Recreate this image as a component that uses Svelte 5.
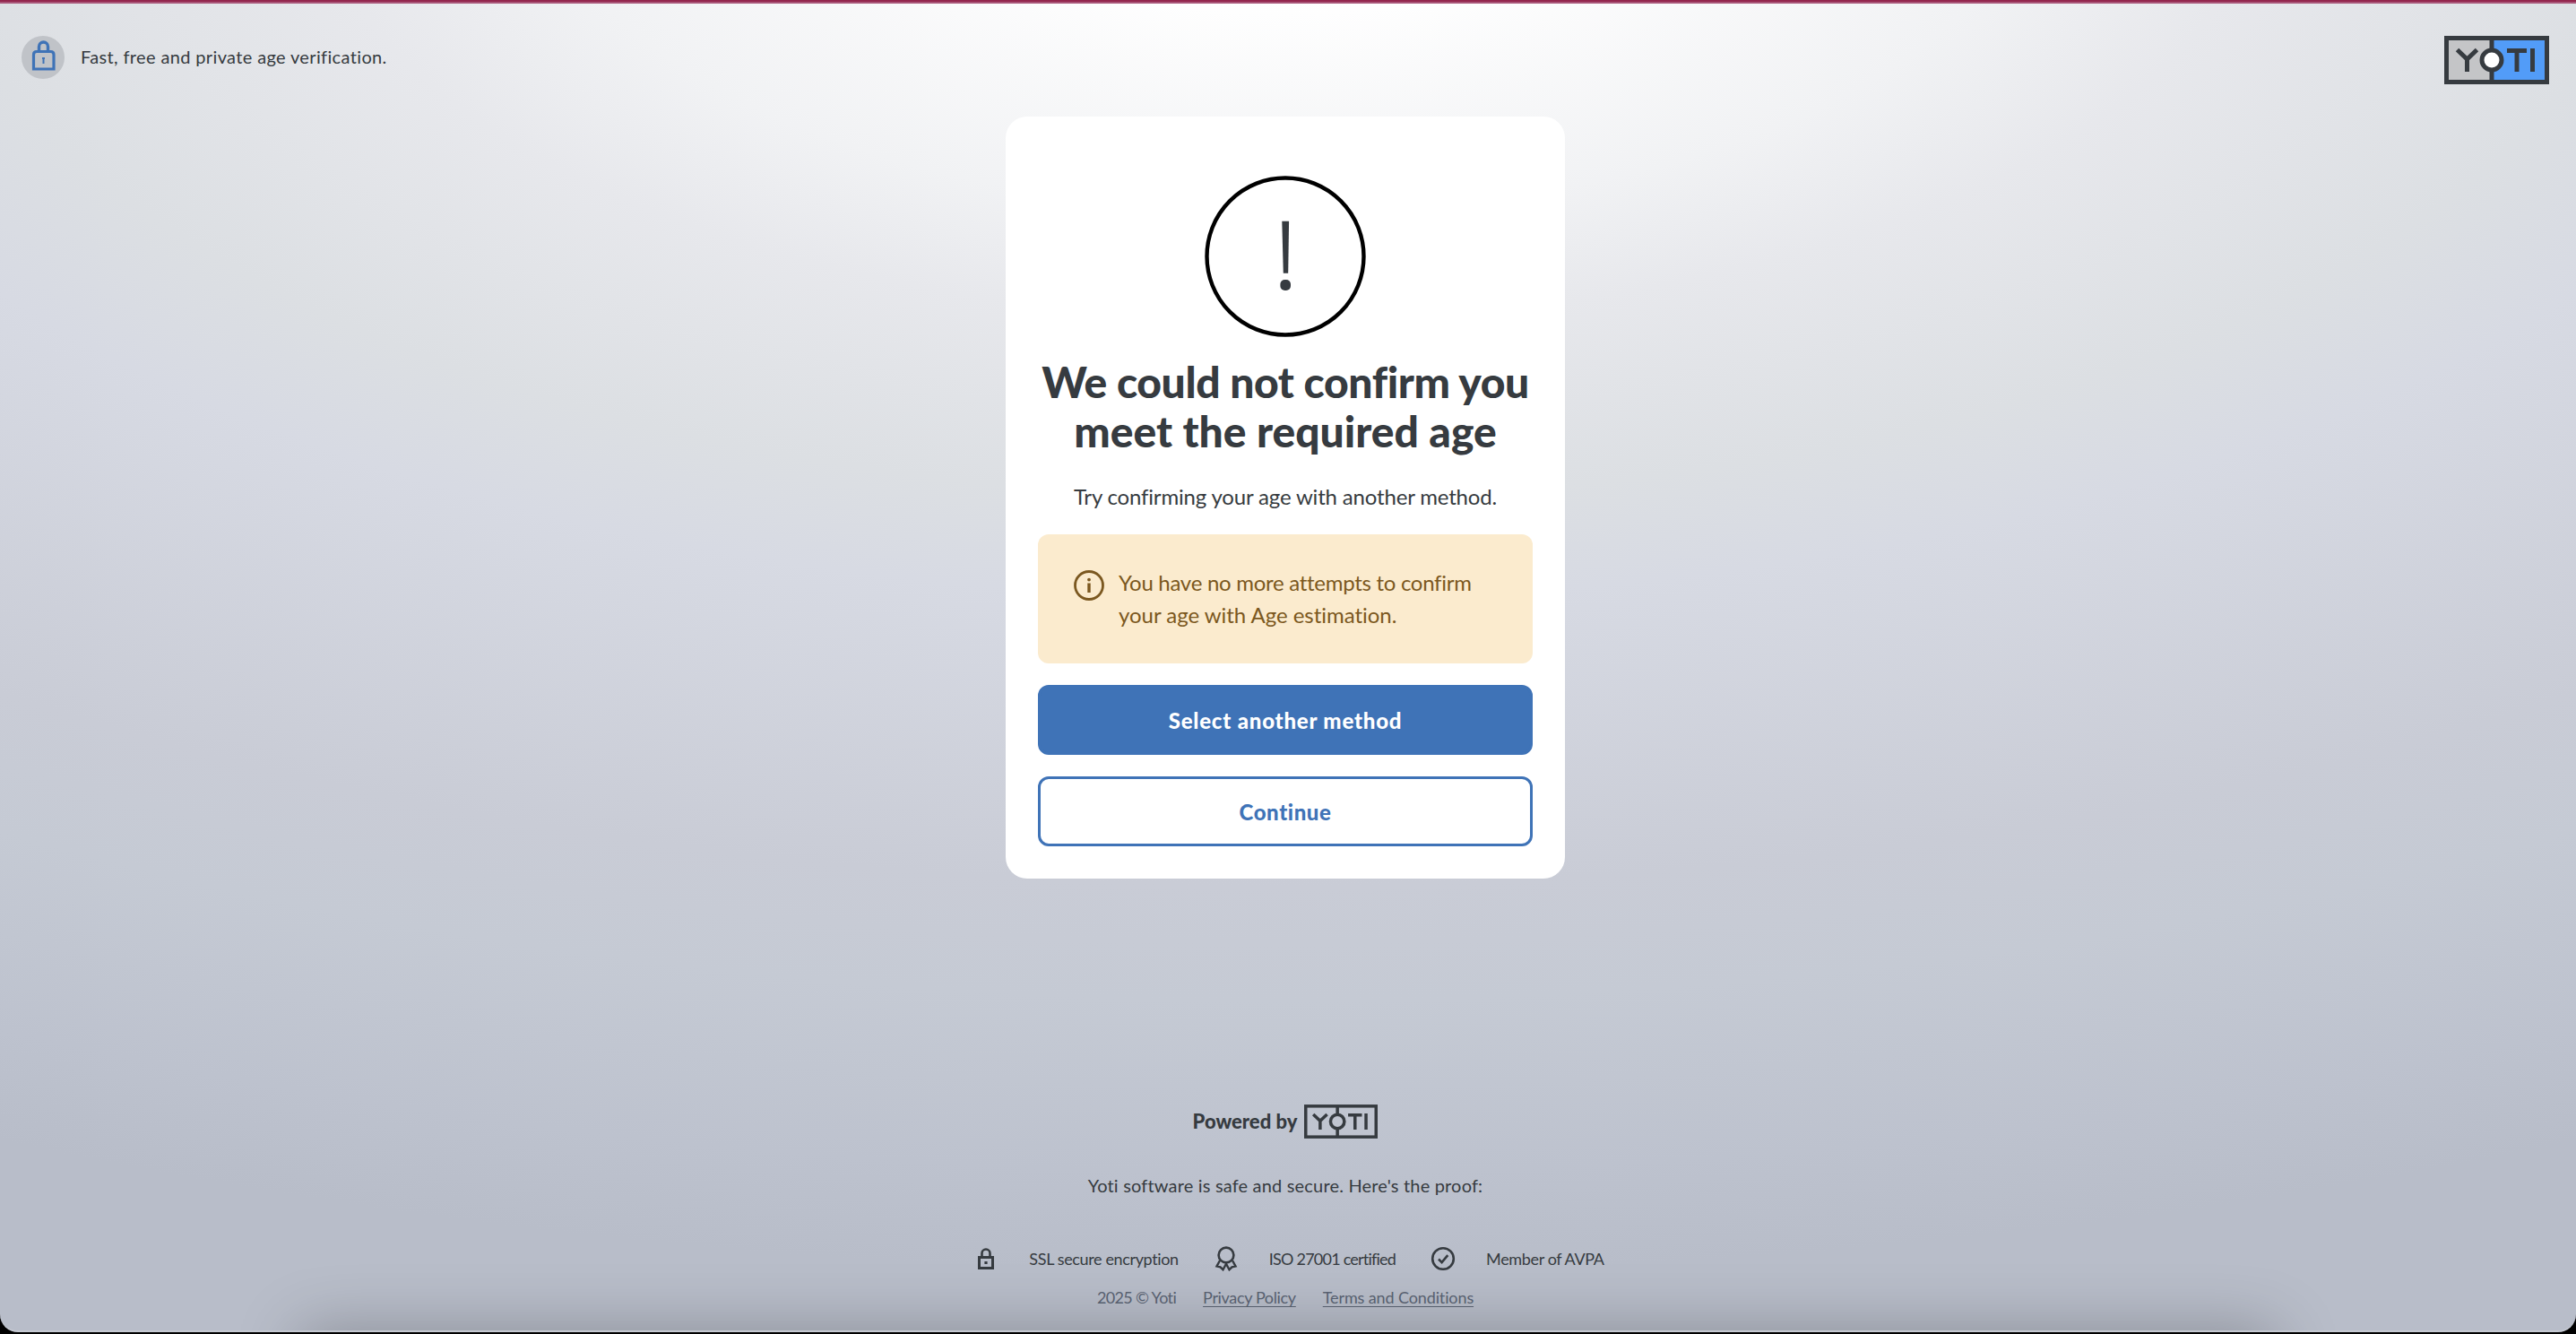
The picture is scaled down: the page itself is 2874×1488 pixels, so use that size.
<script>
    const badges = [
        { icon: "lock", label: "SSL secure encryption" },
        { icon: "ribbon", label: "ISO 27001 certified" },
        { icon: "check", label: "Member of AVPA" },
    ];
</script>

{#snippet yotiMark()}
    <rect x="2.5" y="2.5" width="112" height="49" stroke-width="5" />
    <path d="M53 3v11M53 40v11" stroke-width="5" />
    <circle class="mark-ring" cx="53" cy="27" r="11" stroke-width="5" />
    <path
        d="M14.5 15.5 L25.5 26 L36.5 15.5 M25.5 25 V40 M70 16.5 H92 M81 15 V40 M98.5 14 V40"
        stroke-width="5"
    />
{/snippet}

<div class="screen">
    <div class="page">
        <header>
            <div class="tagline">
                <span class="lock-badge">
                    <svg width="48" height="48" viewBox="0 0 48 48" fill="none" stroke="#3f73b7">
                        <path d="M19.5 17v-5a5 5 0 0 1 10 0v5" stroke-width="3.4" />
                        <path d="M13.5 37V21q0-3.5 3.5-3.5h15.5q3.5 0 3.5 3.5v16z" stroke-width="3.2" />
                        <path d="M23 25h3M24.5 24v7" stroke-width="2" />
                    </svg>
                </span>
                <span class="tagline-text">Fast, free and private age verification.</span>
            </div>
            <svg class="logo" width="117" height="54" viewBox="0 0 117 54">
                <rect x="2" y="2" width="51" height="50" fill="#c4c5c7" stroke="none" />
                <rect x="53" y="2" width="62" height="50" fill="#529cf8" stroke="none" />
                {@render yotiMark()}
            </svg>
        </header>

        <main>
            <svg class="alert" width="180" height="180" viewBox="0 0 180 180">
                <circle cx="90" cy="90" r="87.5" fill="none" stroke="#000" stroke-width="4.4" />
                <path d="M86.3 50.7h7.8l-.9 58h-5.4z" fill="#363b40" />
                <rect x="84.4" y="116" width="11.6" height="12" rx="5" fill="#363b40" />
            </svg>
            <h1><span class="h-first">We could not confirm you</span><br />meet the required age</h1>
            <p class="lead">Try confirming your age with another method.</p>
            <div class="notice">
                <svg width="34" height="34" viewBox="0 0 34 34" fill="none" stroke="#7b5820">
                    <circle cx="17" cy="17" r="15.5" stroke-width="2.8" />
                    <path d="M17 14.5V25" stroke-width="3.4" />
                    <circle cx="17" cy="10.6" r="1.9" fill="#7b5820" stroke="none" />
                </svg>
                <p><span class="n-first">You have no more attempts to confirm</span><br />your age with Age estimation.</p>
            </div>
            <button class="primary">Select another method</button>
            <button class="secondary">Continue</button>
        </main>

        <footer>
            <div class="powered">
                <span>Powered by</span>
                <svg class="logo plain" width="82" height="38" viewBox="0 0 117 54">
                    {@render yotiMark()}
                </svg>
            </div>
            <p class="proof">Yoti software is safe and secure. Here's the proof:</p>
            <ul class="badges">
                {#each badges as badge}
                    <li class={badge.icon}>
                        <svg width="28" height="28" viewBox="0 0 28 28" fill="none" stroke="#363b40" stroke-width="2.6">
                            {#if badge.icon === "lock"}
                                <path d="M6.5 12.5h15v12h-15z" stroke-width="3" />
                                <path d="M9.5 12V8a4.5 4.5 0 0 1 9 0v4" />
                                <path d="M12.4 18.5h3.2" stroke-width="3" />
                            {:else if badge.icon === "ribbon"}
                                <circle cx="14" cy="10" r="8.4" />
                                <path d="M7 16 3.5 22.5l4 .8 3 2.9 3.5-6.5 3.5 6.5 3-2.9 4-.8L21 16" stroke-width="2.4" />
                            {:else}
                                <circle cx="14" cy="14" r="11.8" />
                                <path d="m9 14.5 3.6 3.6 6.7-8" />
                            {/if}
                        </svg>
                        <span>{badge.label}</span>
                    </li>
                {/each}
            </ul>
            <div class="legal">
                <span class="year">2025 © Yoti</span>
                <a class="privacy" href="#privacy">Privacy Policy</a>
                <a class="terms" href="#terms">Terms and Conditions</a>
            </div>
        </footer>
    </div>
</div>

<style>
    :global(body) {
        margin: 0;
        background: #000;
    }

    .screen {
        position: relative;
        box-sizing: border-box;
        width: 2874px;
        height: 1486px;
        padding-right: 6px;
        overflow: hidden;
        border-top: 2px solid #93264d;
        border-bottom: 2px solid #c5c9d2;
        border-radius: 0 0 20px 20px;
        color: #363b40;
        font-family: Lato, "Open Sans", sans-serif;
        background:
            linear-gradient(#a85578, #a85578) top / 100% 2px no-repeat,
            radial-gradient(
                3456px 1600px at 50% -150px,
                #fff 9%,
                #f1f2f4 24%,
                #e7e8ec 31.5%,
                #dcdfe3 44%,
                #d7dae3 51%,
                #c9ccd6 71%,
                #c5cad4 79%,
                #bdc2ce 91%,
                #b8bdc9 98%
            );
    }

    /* soft shade along the bottom edge */
    .screen::after {
        content: "";
        position: absolute;
        top: 100%;
        left: 335px;
        right: 335px;
        height: 100px;
        box-shadow: 0 0 70px rgba(0, 0, 0, 0.26);
    }

    .page {
        display: flex;
        flex-direction: column;
        align-items: center;
        height: 100%;
    }

    header {
        box-sizing: border-box;
        display: flex;
        justify-content: space-between;
        align-items: flex-start;
        width: 100%;
        height: 128px;
        padding: 38px 24px 0;
    }

    .tagline {
        display: flex;
        align-items: center;
        gap: 18px;
        font-size: 20px;
        letter-spacing: 0.36px;
    }

    .tagline-text {
        line-height: 46px;
        margin-top: -2px;
    }

    .lock-badge {
        width: 48px;
        height: 48px;
        border-radius: 50%;
        background: #c0c3c8;
    }

    svg {
        display: block;
        flex: none;
    }

    .logo {
        fill: none;
        stroke: #363b40;
    }

    .logo .mark-ring {
        fill: #fff;
    }

    .plain .mark-ring {
        fill: none;
    }

    main {
        box-sizing: border-box;
        display: flex;
        flex-direction: column;
        align-items: center;
        width: 624px;
        height: 850px;
        padding: 66px 36px 36px;
        border-radius: 24px;
        background: #fff;
    }

    h1 {
        margin: 22px 0 0;
        font-size: 48px;
        font-weight: 900;
        line-height: 55px;
        text-align: center;
        white-space: nowrap;
    }

    .h-first {
        letter-spacing: -0.4px;
    }

    .lead {
        margin: 28px 0 0;
        font-size: 24px;
        line-height: 36px;
        letter-spacing: -0.17px;
    }

    .notice {
        box-sizing: border-box;
        display: flex;
        gap: 16px;
        width: 100%;
        height: 144px;
        margin: auto 0 24px;
        padding: 36px 40px;
        border-radius: 12px;
        color: #7b5820;
        background: #fbebce;
    }

    .notice svg {
        margin-top: 4px;
    }

    .notice p {
        margin: 0;
        font-size: 24px;
        line-height: 36px;
        letter-spacing: -0.03px;
        white-space: nowrap;
    }

    .notice .n-first {
        letter-spacing: -0.28px;
    }

    button {
        box-sizing: border-box;
        flex: none;
        width: 100%;
        height: 78px;
        border: 3px solid #3f73b7;
        border-radius: 12px;
        font: 900 24px Lato, sans-serif;
    }

    .primary {
        margin-bottom: 24px;
        color: #fff;
        background: #3f73b7;
        letter-spacing: 0.8px;
    }

    .secondary {
        color: #3f73b7;
        background: #fff;
        letter-spacing: 0.6px;
    }

    footer {
        display: flex;
        flex-direction: column;
        align-items: center;
        margin-top: 252px;
    }

    .powered {
        display: flex;
        gap: 8px;
        font-size: 22px;
        font-weight: 900;
        line-height: 37px;
    }

    .proof {
        margin: 36px 0 0;
        font-size: 20px;
        line-height: 32px;
        letter-spacing: 0.18px;
    }

    .badges {
        display: flex;
        margin: 52px 0 0;
        padding: 0 0 0 8px;
        list-style: none;
        font-size: 18px;
        line-height: 28px;
        letter-spacing: -0.36px;
    }

    .badges li {
        display: flex;
        gap: 34px;
        margin-right: 39px;
        white-space: nowrap;
    }

    .badges .ribbon {
        letter-spacing: -0.78px;
    }

    .badges li:last-child {
        margin-right: 0;
    }

    .legal {
        display: flex;
        gap: 30px;
        margin-top: 14px;
        font-size: 18px;
        line-height: 30px;
        color: #5b6474;
    }

    .year {
        letter-spacing: -0.65px;
    }

    .privacy {
        letter-spacing: -0.35px;
    }

    .terms {
        letter-spacing: -0.12px;
    }

    a {
        color: inherit;
        text-decoration-thickness: 1px;
        text-underline-offset: 3px;
    }
</style>
